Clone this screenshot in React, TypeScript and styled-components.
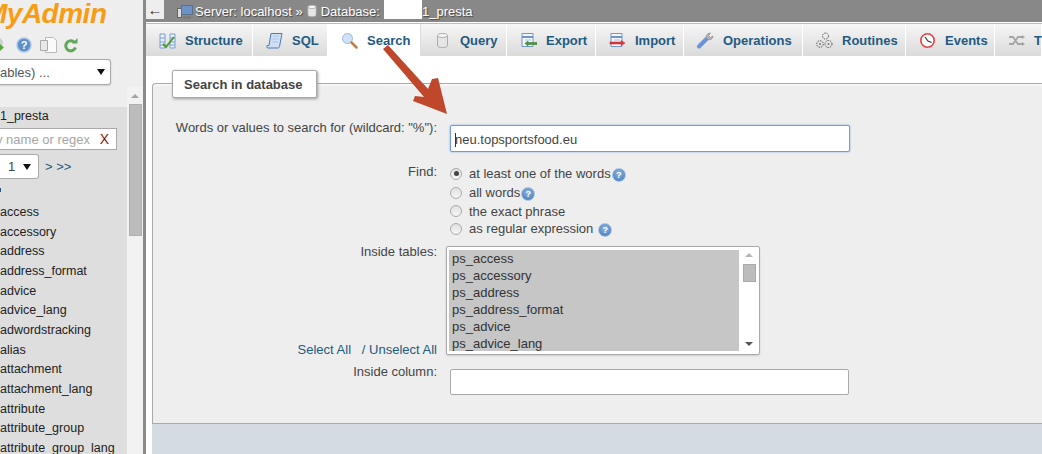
import styled, { createGlobalStyle } from 'styled-components';
import type { ReactNode } from 'react';

const GlobalStyle = createGlobalStyle`
  html, body {
    margin: 0;
    padding: 0;
    height: 454px;
    overflow: hidden;
    background: #fff;
  }
  body {
    font-family: 'Liberation Sans', Arial, sans-serif;
    font-size: 13px;
    color: #444;
  }
`;

const Page = styled.div`
  position: relative;
  display: flex;
  width: 1042px;
  height: 454px;
  overflow: hidden;
`;

/* ---------- navigation panel ---------- */

const Sidebar = styled.aside`
  display: flex;
  flex-direction: column;
  width: 143px;
  flex-shrink: 0;
  background: #eeeeee;
  overflow: hidden;
`;

const Logo = styled.div`
  height: 32px;
  margin-left: -16px;
  font-size: 28px;
  font-weight: bold;
  font-style: italic;
  line-height: 28px;
  letter-spacing: -0.5px;
  color: #f89c14;
  white-space: nowrap;
`;

const IconRow = styled.div`
  display: flex;
  align-items: center;
  gap: 7px;
  height: 26px;
  margin-left: -5px;
`;

const ServerSelect = styled.div`
  display: flex;
  align-items: center;
  justify-content: space-between;
  box-sizing: border-box;
  width: 111px;
  height: 26px;
  margin-top: 1px;
  padding-right: 5px;
  background: #fff;
  border: 1px solid #aaa;
  border-left: 0;
  border-radius: 0 3px 3px 0;
  box-shadow: 0 1px 2px #ccc;
  color: #555;
`;

const Caret = styled.span`
  width: 0;
  height: 0;
  border-left: 4px solid transparent;
  border-right: 4px solid transparent;
  border-top: 6px solid #111;
`;

const Tree = styled.div`
  display: flex;
  flex: 1;
  min-height: 0;
  margin-top: 2px;
`;

const TreeBody = styled.div`
  width: 127px;
  flex-shrink: 0;
  background: linear-gradient(#eeeeee 0, #eeeeee 20px, #dedede 20px);
  color: #222;
`;

const DbName = styled.div`
  height: 20px;
  padding-top: 21px;
  line-height: 16px;
  font-size: 12.5px;
`;

const FilterBox = styled.div`
  display: flex;
  align-items: center;
  justify-content: space-between;
  box-sizing: border-box;
  width: 117px;
  height: 22px;
  padding-right: 7px;
  background: #fff;
  border: 1px solid #aaa;
  border-left: 0;
  color: #a5a5a5;
  white-space: nowrap;
`;

const FilterHint = styled.span`
  margin-left: -4px;
`;

const ClearMark = styled.span`
  color: #8b1414;
  font-size: 14px;
`;

const Pager = styled.div`
  display: flex;
  align-items: center;
  gap: 6px;
  height: 25px;
  margin-top: 4px;
  color: #235a81;
`;

const PageSelect = styled.div`
  display: flex;
  align-items: center;
  justify-content: space-between;
  box-sizing: border-box;
  width: 39px;
  height: 25px;
  padding: 0 7px 0 8px;
  background: #fff;
  border: 1px solid #aaa;
  border-left: 0;
  border-radius: 0 3px 3px 0;
  color: #444;
`;

const TreeMark = styled.div`
  width: 1px;
  height: 4px;
  margin-top: 9px;
  background: #235a81;
`;

const TreeList = styled.ul`
  list-style: none;
  margin: 10px 0 0;
  padding: 0;
`;

const TreeItem = styled.li`
  height: 19.66px;
  line-height: 20px;
  font-size: 12.5px;
  white-space: nowrap;
`;

const TreeScroll = styled.div`
  width: 16px;
  flex-shrink: 0;
  background: #f2f2f2;
`;

const ScrollUp = styled.div`
  width: 0;
  height: 0;
  margin: 7px auto 6px;
  border-left: 4px solid transparent;
  border-right: 4px solid transparent;
  border-bottom: 4px solid #a3a3a3;
`;

const ScrollThumb = styled.div`
  width: 13px;
  height: 132px;
  margin: 0 auto;
  background: #bcbcbc;
  border: 1px solid #b0b0b0;
  box-sizing: border-box;
`;

const Divider = styled.div`
  width: 3px;
  flex-shrink: 0;
  background: #8a8a8a;
`;

/* ---------- main area ---------- */

const Main = styled.main`
  display: flex;
  flex-direction: column;
  flex: 1;
  min-width: 0;
`;

const ServerBar = styled.div`
  display: flex;
  align-items: center;
  height: 22px;
  flex-shrink: 0;
  background: #888;
  color: #fff;
  text-shadow: 1px 1px 1px #444;
  white-space: nowrap;
`;

const BackButton = styled.div`
  display: flex;
  align-items: center;
  justify-content: center;
  width: 18px;
  height: 19px;
  margin: 0 13px 3px 0;
  background: #eee;
  color: #333;
  font-size: 15px;
  text-shadow: none;
`;

const Crumb = styled.span`
  display: inline-flex;
  align-items: center;
  gap: 2px;
  margin-right: 2px;
`;

const Redacted = styled.span`
  display: inline-block;
  width: 38px;
  height: 19px;
  margin: 0 -2px 3px 2px;
  background: #fff;
`;

const TabBar = styled.nav`
  display: flex;
  height: 33px;
  flex-shrink: 0;
  margin-top: 1px;
  border-top: 1px solid #bbb;
  box-sizing: border-box;
`;

const Tab = styled.div<{ $active?: boolean; $width: number }>`
  display: flex;
  align-items: center;
  gap: 9px;
  flex-shrink: 0;
  box-sizing: border-box;
  width: ${(p) => p.$width}px;
  padding-left: 13px;
  background: ${(p) => (p.$active ? '#fff' : 'linear-gradient(#f6f6f6, #dadada)')};
  border-right: 1px solid ${(p) => (p.$active ? '#ddd' : '#fff')};
  color: #235a81;
  font-weight: bold;
  white-space: nowrap;
`;

const Content = styled.div`
  display: flex;
  flex-direction: column;
  flex: 1;
  min-height: 0;
  padding: 27px 0 0 6px;
`;

const Fieldset = styled.section`
  position: relative;
  flex-shrink: 0;
  box-sizing: border-box;
  height: 341px;
  padding: 36px 0 0 22px;
  background: #eee;
  border: 1px solid #aaa;
  border-right: 0;
  border-radius: 4px 0 0 0;
  box-shadow: inset 0 3px 3px -2px #fff;
`;

const Legend = styled.div`
  position: absolute;
  top: -14px;
  left: 19px;
  box-sizing: border-box;
  width: 145px;
  height: 28px;
  padding-left: 11px;
  line-height: 27px;
  background: #fff;
  border: 1px solid #aaa;
  border-radius: 2px;
  box-shadow: 1px 1px 3px #999;
  font-weight: bold;
`;

const FormGrid = styled.div`
  display: grid;
  grid-template-columns: 262px 1fr;
  column-gap: 13px;
  align-items: start;
`;

const Label = styled.label<{ $top?: number }>`
  margin-top: ${(p) => p.$top ?? 0}px;
  text-align: right;
  line-height: 16px;
  white-space: nowrap;
`;

const QueryInput = styled.div`
  box-sizing: border-box;
  width: 400px;
  height: 27px;
  margin-top: 5px;
  padding-left: 4px;
  line-height: 27px;
  background: #fff;
  border: 1px solid #6d9edb;
  border-radius: 2px;
  box-shadow: 0 0 2px #7aa6e0;
`;

const TextCursor = styled.span`
  display: inline-block;
  width: 1px;
  height: 14px;
  margin-right: -1px;
  vertical-align: -3px;
  background: #333;
`;

const RadioGroup = styled.div`
  display: flex;
  flex-direction: column;
  margin-top: 12px;
`;

const RadioRow = styled.div<{ $height: number }>`
  display: flex;
  align-items: center;
  height: ${(p) => p.$height}px;
`;

const Radio = styled.span<{ $checked?: boolean }>`
  display: flex;
  align-items: center;
  justify-content: center;
  box-sizing: border-box;
  width: 12px;
  height: 12px;
  margin-right: 7px;
  border-radius: 50%;
  border: 1px solid #aaa;
  background: linear-gradient(#e0e0e0, #f6f6f6);

  &::after {
    content: '';
    display: ${(p) => (p.$checked ? 'block' : 'none')};
    width: 5px;
    height: 5px;
    border-radius: 50%;
    background: #444;
  }
`;

const Help = styled.span<{ $gap?: number }>`
  display: inline-flex;
  align-items: center;
  justify-content: center;
  box-sizing: border-box;
  width: 14px;
  height: 14px;
  margin-left: ${(p) => p.$gap ?? 1}px;
  margin-top: 2px;
  border-radius: 50%;
  border: 1px solid #a9c6e7;
  background: radial-gradient(circle at 50% 35%, #8fb5e0, #3f76b8);
  color: #fff;
  font-size: 9px;
  font-weight: bold;
`;

const LabelStack = styled.div`
  display: flex;
  flex-direction: column;
  justify-content: space-between;
  height: 114px;
  margin-top: 7px;
`;

const LinkRow = styled.div`
  text-align: right;
  color: #235a81;
  line-height: 16px;
`;

const TableList = styled.div`
  display: flex;
  box-sizing: border-box;
  width: 314px;
  height: 109px;
  margin: 9px 0 0 -4px;
  padding: 3px 0 0 2px;
  background: #fff;
  border: 1px solid #aaa;
  border-radius: 2px;
  box-shadow: 0 1px 2px #ccc;
`;

const Options = styled.div`
  box-sizing: border-box;
  width: 290px;
  height: 101px;
  overflow: hidden;
  padding-left: 3px;
  background: #c6c6c6;
  color: #333;
`;

const OptionItem = styled.div`
  height: 17px;
  line-height: 17px;
`;

const ListScroll = styled.div`
  display: flex;
  flex-direction: column;
  align-items: center;
  flex: 1;
  margin-top: -3px;
`;

const ListArrow = styled.span<{ $down?: boolean }>`
  width: 0;
  height: 0;
  margin-top: ${(p) => (p.$down ? 'auto' : '6px')};
  margin-bottom: ${(p) => (p.$down ? '8px' : '0')};
  border-left: 4px solid transparent;
  border-right: 4px solid transparent;
  ${(p) => (p.$down ? 'border-top: 4px solid #555;' : 'border-bottom: 4px solid #b5b5b5;')}
`;

const ListThumb = styled.div`
  width: 13px;
  height: 18px;
  margin-top: 7px;
  background: #bcbcbc;
  border: 1px solid #aaa;
  box-sizing: border-box;
`;

const ColumnInput = styled.div`
  box-sizing: border-box;
  width: 399px;
  height: 26px;
  margin-top: 11px;
  background: #fff;
  border: 1px solid #aaa;
  border-radius: 2px;
`;

const Footer = styled.div`
  flex: 1;
  background: #d4dbe3;
`;

const ArrowOverlay = styled.svg`
  position: absolute;
  left: 0;
  top: 0;
  pointer-events: none;
`;

/* ---------- small drawings ---------- */

const IconSvg = styled.svg`
  flex-shrink: 0;
`;

const Glyph = ({ children, w = 17, h = 17 }: { children: ReactNode; w?: number; h?: number }) => (
  <IconSvg width={w} height={h} viewBox={`0 0 ${w} ${h}`}>
    {children}
  </IconSvg>
);

const DbIcon = ({ size = 17 }: { size?: number }) => (
  <IconSvg width={size} height={size} viewBox="0 0 17 17">
    <path d="M3.5 3.5v10c0 1.200 2.200 2 5 2s5-.8 5-2v-10z" fill="#e6e6e6" stroke="#aaa" />
    <ellipse cx="8.500" cy="3.500" rx="5" ry="2" fill="#f8f8f8" stroke="#aaa" />
  </IconSvg>
);

const StructureIcon = () => (
  <Glyph>
    <path d="M1 2h5v14H1zM11 2h5v14h-5z" fill="#e8f0fa" stroke="#7d9fcf" />
    <path d="M1 6h5M1 10h5M1 13h5M11 6h5M11 10h5M11 13h5" stroke="#7d9fcf" />
    <path d="M4 12l3 3 8-10" fill="none" stroke="#4f9a35" strokeWidth="2" />
  </Glyph>
);

const SqlIcon = () => (
  <Glyph>
    <path d="M5 1.500h11l-2.500 13c-.3 1.300-1 1.500-2 1.500H2c-1 0-1.500-1-1-2.500h2z" fill="#cfe0f5" stroke="#4a7ab8" />
    <path d="M7 4h6M6.500 7h6M6 10h6" stroke="#a9c4e6" />
  </Glyph>
);

const SearchIcon = () => (
  <Glyph>
    <circle cx="6.500" cy="6.500" r="5" fill="#cfe2f7" stroke="#9fb9d8" />
    <path d="M10.500 10.500l5 5" stroke="#b8804a" strokeWidth="2.500" strokeLinecap="round" />
  </Glyph>
);

const ExportIcon = () => (
  <Glyph>
    <path d="M2 1.500h11v13H2z" fill="#f4f7fb" stroke="#6f96cc" />
    <path d="M2 5h11" stroke="#6f96cc" strokeWidth="2" />
    <path d="M5 8h6M5 11h6" stroke="#a8c0de" />
    <path d="M17 10.500H8V9l-3 2.500L8 14v-1.500h9z" fill="#4c9a30" stroke="#2f6e1d" strokeWidth=".5" />
  </Glyph>
);

const ImportIcon = () => (
  <Glyph>
    <path d="M2 1.500h11v13H2z" fill="#f4f7fb" stroke="#6f96cc" />
    <path d="M2 5h11" stroke="#6f96cc" strokeWidth="2" />
    <path d="M5 8h6" stroke="#a8c0de" />
    <path d="M1 10h11V8.500l4 2.500-4 2.500V12H1z" fill="#e8393a" stroke="#b92020" strokeWidth=".5" />
  </Glyph>
);

const WrenchIcon = () => (
  <Glyph>
    <path d="M2 14.500L9.500 7" stroke="#6a93d8" strokeWidth="4" strokeLinecap="round" />
    <path d="M9 5.500c0-2.500 2-4.500 4.500-4.500l-2 2.500 2 2 2.500-1.500c0 2.500-2.500 4.500-5 3.500z" fill="#b5b5b5" stroke="#888" strokeWidth=".7" />
  </Glyph>
);

const RoutinesIcon = () => (
  <Glyph>
    <g fill="none" stroke="#555" strokeWidth="1" strokeDasharray="1.500 1">
      <circle cx="9.500" cy="4" r="3" />
      <circle cx="4" cy="12" r="3.300" />
      <circle cx="12.500" cy="12" r="3.500" />
    </g>
    <circle cx="4" cy="12" r="1" fill="#777" />
    <circle cx="12.500" cy="12" r="1" fill="#777" />
  </Glyph>
);

const EventsIcon = () => (
  <Glyph>
    <circle cx="8.500" cy="8.500" r="6.700" fill="#fff" stroke="#e8403f" strokeWidth="1.600" />
    <path d="M6 5l3 4 3.500 1.500" fill="none" stroke="#333" strokeWidth="1.200" />
  </Glyph>
);

const TriggersIcon = () => (
  <Glyph>
    <path d="M1 5h4l5 7h4M1 12h4l5-7h4" fill="none" stroke="#a5a5a5" strokeWidth="1.800" />
    <path d="M14 3l3 2-3 2zM14 10l3 2-3 2z" fill="#a5a5a5" />
  </Glyph>
);

const ServerIcon = () => (
  <Glyph w={16} h={15}>
    <rect x="0.500" y="4.500" width="4" height="9" fill="#ddd" stroke="#666" />
    <rect x="4.500" y="1.500" width="11" height="9" fill="#6d93c6" stroke="#5b6f8a" />
    <path d="M6 13.500h8" stroke="#777" strokeWidth="2" />
  </Glyph>
);

const GreenGoIcon = () => (
  <Glyph w={14} h={16}>
    <circle cx="2" cy="6" r="6" fill="#d0d0d0" />
    <path d="M0 9h4V6l5 4.500L4 15v-3H0z" fill="#5aa845" />
  </Glyph>
);

const DocsIcon = () => (
  <Glyph w={17} h={16}>
    <circle cx="8" cy="8" r="7" fill="#5d8fca" stroke="#a9c6e7" strokeWidth="1.500" />
    <text x="8" y="12" textAnchor="middle" fontSize="11" fontWeight="bold" fill="#fff" fontFamily="Liberation Sans">?</text>
  </Glyph>
);

const PagesIcon = () => (
  <Glyph w={17} h={16}>
    <path d="M5.500.5h8l3 3v12h-11z" fill="#fafafa" stroke="#bbb" />
    <path d="M.5 3.500h7v10h-7z" fill="#e8e8e8" stroke="#aaa" />
  </Glyph>
);

const ReloadIcon = () => (
  <Glyph w={14} h={15}>
    <path d="M11.500 9.500a5 5 0 1 1-1-5" fill="none" stroke="#5fa85a" strokeWidth="3" />
    <path d="M8 5.500h5.500V0z" fill="#5fa85a" />
  </Glyph>
);

const tabs: { label: string; width: number; icon: ReactNode; active?: boolean }[] = [
  { label: 'Structure', width: 107, icon: <StructureIcon /> },
  { label: 'SQL', width: 75, icon: <SqlIcon /> },
  { label: 'Search', width: 93, icon: <SearchIcon />, active: true },
  { label: 'Query', width: 86, icon: <DbIcon /> },
  { label: 'Export', width: 89, icon: <ExportIcon /> },
  { label: 'Import', width: 88, icon: <ImportIcon /> },
  { label: 'Operations', width: 119, icon: <WrenchIcon /> },
  { label: 'Routines', width: 103, icon: <RoutinesIcon /> },
  { label: 'Events', width: 89, icon: <EventsIcon /> },
  { label: 'T', width: 47, icon: <TriggersIcon /> },
];

const treeTables = [
  'access',
  'accessory',
  'address',
  'address_format',
  'advice',
  'advice_lang',
  'adwordstracking',
  'alias',
  'attachment',
  'attachment_lang',
  'attribute',
  'attribute_group',
  'attribute_group_lang',
];

const optionTables = ['ps_access', 'ps_accessory', 'ps_address', 'ps_address_format', 'ps_advice', 'ps_advice_lang'];

export default function App() {
  return (
    <Page>
      <GlobalStyle />
      <Sidebar>
        <Logo>MyAdmin</Logo>
        <IconRow>
          <GreenGoIcon />
          <DocsIcon />
          <PagesIcon />
          <ReloadIcon />
        </IconRow>
        <ServerSelect>
          <span>ables) ...</span>
          <Caret />
        </ServerSelect>
        <Tree>
          <TreeBody>
            <DbName>1_presta</DbName>
            <FilterBox>
              <FilterHint>y name or regex</FilterHint>
              <ClearMark>X</ClearMark>
            </FilterBox>
            <Pager>
              <PageSelect>
                <span>1</span>
                <Caret />
              </PageSelect>
              <span>&gt; &gt;&gt;</span>
            </Pager>
            <TreeMark />
            <TreeList>
              {treeTables.map((name) => (
                <TreeItem key={name}>{name}</TreeItem>
              ))}
            </TreeList>
          </TreeBody>
          <TreeScroll>
            <ScrollUp />
            <ScrollThumb />
          </TreeScroll>
        </Tree>
      </Sidebar>
      <Divider />
      <Main>
        <ServerBar>
          <BackButton>←</BackButton>
          <Crumb>
            <ServerIcon />
            Server: localhost »
          </Crumb>
          <Crumb>
            <DbIcon size={14} />
            Database:
            <Redacted />
            1_presta
          </Crumb>
        </ServerBar>
        <TabBar>
          {tabs.map((tab) => (
            <Tab key={tab.label} $active={tab.active} $width={tab.width}>
              {tab.icon}
              {tab.label}
            </Tab>
          ))}
        </TabBar>
        <Content>
          <Fieldset>
            <Legend>Search in database</Legend>
            <FormGrid>
              <Label>Words or values to search for (wildcard: "%"):</Label>
              <QueryInput>
                <TextCursor />
                neu.topsportsfood.eu
              </QueryInput>
              <Label $top={12}>Find:</Label>
              <RadioGroup>
                <RadioRow $height={19}>
                  <Radio $checked />
                  at least one of the words
                  <Help>?</Help>
                </RadioRow>
                <RadioRow $height={19}>
                  <Radio />
                  all words
                  <Help>?</Help>
                </RadioRow>
                <RadioRow $height={18}>
                  <Radio />
                  the exact phrase
                </RadioRow>
                <RadioRow $height={17}>
                  <Radio />
                  as regular expression
                  <Help $gap={5}>?</Help>
                </RadioRow>
              </RadioGroup>
              <LabelStack>
                <Label>Inside tables:</Label>
                <LinkRow>Select All &nbsp; / Unselect All</LinkRow>
              </LabelStack>
              <TableList>
                <Options>
                  {optionTables.map((name) => (
                    <OptionItem key={name}>{name}</OptionItem>
                  ))}
                </Options>
                <ListScroll>
                  <ListArrow />
                  <ListThumb />
                  <ListArrow $down />
                </ListScroll>
              </TableList>
              <Label $top={6}>Inside column:</Label>
              <ColumnInput />
            </FormGrid>
          </Fieldset>
          <Footer />
        </Content>
      </Main>
      <ArrowOverlay width="1042" height="454" viewBox="0 0 1042 454">
        <path d="M383 49L388 45L428 89L432 79L438 78L447 114L413 101L415 96L424 97z" fill="#bf472c" />
      </ArrowOverlay>
    </Page>
  );
}
